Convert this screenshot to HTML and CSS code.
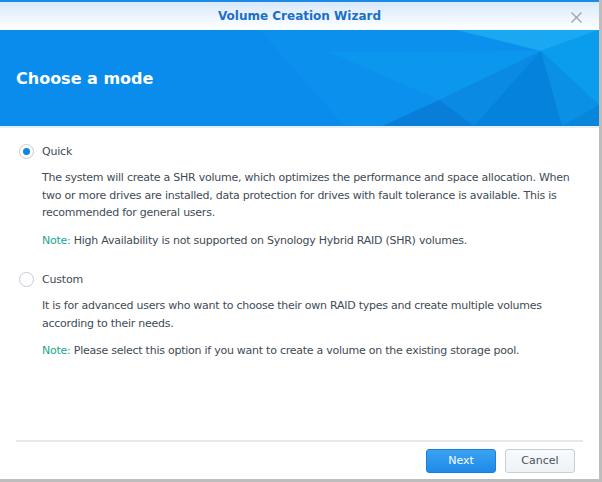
FILE: index.html
```html
<!DOCTYPE html>
<html lang="en">

<head>
    <meta charset="UTF-8">
    <meta name="viewport" content="width=device-width, initial-scale=1.0">
    <title>Volume Creation Wizard</title>
    <link rel="stylesheet" href="styles.css">
</head>

<body>
    <div class="dialog">
        <!-- Title bar -->
        <div class="titlebar">
            <span class="title">Volume Creation Wizard</span>
            <svg class="close" viewBox="0 0 11 11" width="11" height="11">
                <path d="M0.5 0.5 L10.5 10.5 M10.5 0.5 L0.5 10.5" stroke="#9ea3a8" stroke-width="1.3" fill="none"/>
            </svg>
        </div>

        <!-- Header banner -->
        <div class="banner">
            <svg class="banner-bg" viewBox="0 0 600 96" preserveAspectRatio="none">
                <rect x="0" y="0" width="600" height="96" fill="#0a8eec"/>
                <polygon points="0,0 260,0 345,96 0,96" fill="#098cec"/>
                <polygon points="260,0 457,0 542,21 440,70 383,96 345,96" fill="#0b91ed"/>
                <polygon points="330,22 542,21 440,70" fill="#0e9bef" opacity="0.6"/>
                <polygon points="457,0 600,0 542,21" fill="#1aa8f2"/>
                <polygon points="542,21 600,0 600,75" fill="#0a9ded"/>
                <polygon points="440,70 542,21 475,96" fill="#0a8ae2"/>
                <polygon points="383,96 440,70 475,96" fill="#097ed8"/>
                <polygon points="542,21 563,96 475,96" fill="#0582dc"/>
                <polygon points="542,21 600,75 600,96 563,96" fill="#0a90e4"/>
                <polygon points="600,75 600,96 563,96" fill="#0886dc"/>
            </svg>
            <h1 class="banner-title">Choose a mode</h1>
        </div>

        <!-- Options -->
        <div class="content">
            <div class="option">
                <label class="option-label">
                    <span class="radio checked"></span>
                    Quick
                </label>
                <p class="desc">The system will create a SHR volume, which optimizes the performance and space allocation. When two or more drives are installed, data protection for drives with fault tolerance is available. This is recommended for general users.</p>
                <p class="desc"><span class="note">Note:</span> High Availability is not supported on Synology Hybrid RAID (SHR) volumes.</p>
            </div>

            <div class="option">
                <label class="option-label">
                    <span class="radio"></span>
                    Custom
                </label>
                <p class="desc">It is for advanced users who want to choose their own RAID types and create multiple volumes according to their needs.</p>
                <p class="desc"><span class="note">Note:</span> Please select this option if you want to create a volume on the existing storage pool.</p>
            </div>
        </div>

        <!-- Footer -->
        <div class="footer">
            <button class="btn btn-primary">Next</button>
            <button class="btn">Cancel</button>
        </div>
    </div>
</body>

</html>
```

FILE: styles.css
```css
body {
    margin: 0;
    padding: 0;
    background: #bdbdbd;
    font-family: "DejaVu Sans", Verdana, sans-serif;
}

.dialog {
    width: 599px;
    height: 479px;
    background: #fff;
    display: flex;
    flex-direction: column;
}

.titlebar {
    height: 28px;
    border-top: 2px solid #1c8ae8;
    background: linear-gradient(#d8e9fb, #ffffff);
    display: flex;
    align-items: center;
    justify-content: center;
    position: relative;
}

.title {
    color: #1a6fca;
    font-size: 12px;
    font-weight: bold;
}

.close {
    position: absolute;
    right: 17px;
    top: 10px;
}

.banner {
    height: 96px;
    position: relative;
    display: flex;
    align-items: center;
    border-bottom: 2px solid #e6eef6;
}

.banner-bg {
    position: absolute;
    left: 0;
    top: 0;
    width: 100%;
    height: 100%;
}

.banner-title {
    position: relative;
    margin: 0 0 0 16px;
    color: #fff;
    font-size: 16px;
    font-weight: bold;
}

.content {
    flex: 1;
    padding: 15px 16px 0 19px;
}

.option {
    margin-bottom: 22px;
}

.option-label {
    display: flex;
    align-items: center;
    gap: 8px;
    color: #414b55;
    font-size: 11px;
    letter-spacing: -0.2px;
    height: 16px;
}

.radio {
    width: 13px;
    height: 13px;
    border: 1px solid #c5ccd4;
    border-radius: 50%;
    background: #fff;
    position: relative;
}

.radio.checked::after {
    content: "";
    position: absolute;
    left: 3px;
    top: 3px;
    width: 7px;
    height: 7px;
    border-radius: 50%;
    background: #0a86e8;
}

.desc {
    margin: 10px 0 0 23px;
    color: #414b55;
    font-size: 11px;
    letter-spacing: -0.25px;
    line-height: 17.5px;
}

.note {
    color: #1aa88c;
}

.footer {
    margin: 0 16px;
    border-top: 2px solid #e8e8e8;
    height: 37px;
    display: flex;
    justify-content: flex-end;
    align-items: center;
    gap: 9px;
    padding: 0 8px 0 0;
}

.btn {
    width: 70px;
    height: 24px;
    border: 1px solid #c6ced6;
    border-radius: 3px;
    background: linear-gradient(#f8fafc, #eef2f6);
    color: #4a525a;
    font-family: "DejaVu Sans", Verdana, sans-serif;
    font-size: 11px;
    padding: 0;
}

.btn-primary {
    border-color: #1a7fd8;
    background: linear-gradient(#3ba3f2, #1e8ae8);
    color: #fff;
}
```
